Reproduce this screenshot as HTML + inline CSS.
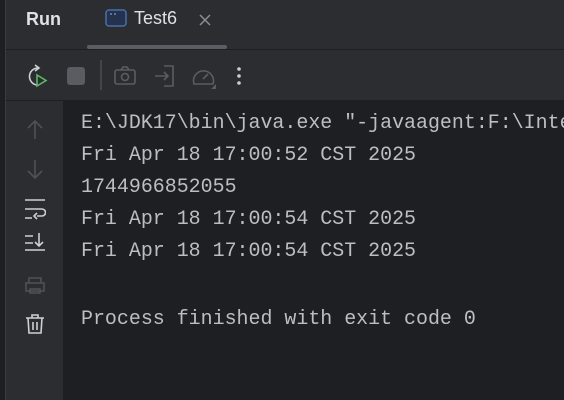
<!DOCTYPE html>
<html><head><style>
*{margin:0;padding:0;box-sizing:border-box}
body{width:564px;height:400px;background:#2b2d30;position:relative;overflow:hidden;font-family:"Liberation Sans",sans-serif}
.ab{position:absolute}
.line{position:absolute;left:81px;font-family:"Liberation Mono",monospace;font-size:19.95px;color:#bcbec4;white-space:pre}
</style></head><body>
<div class="ab" style="left:0;top:0;width:5px;height:400px;background:#1e1f22"></div>
<div class="ab" style="left:5px;top:0;width:1px;height:400px;background:#393b40"></div>
<div class="ab" style="left:26px;top:9px;font-weight:bold;font-size:18px;color:#dfe1e5">Run</div>
<svg class="ab" style="left:105px;top:9px" width="22" height="20"><rect x="1" y="1" width="20" height="16" rx="3" fill="#25324d" stroke="#4a6ea9" stroke-width="1.5"/><path d="M5 5h2M9 5h2" stroke="#7a9ad0" stroke-width="1.2"/></svg>
<div class="ab" style="left:134px;top:8px;font-size:18px;color:#dfe1e5">Test6</div>
<svg class="ab" style="left:198px;top:13px" width="14" height="14"><path d="M2 2l10 10M12 2L2 12" stroke="#8c8f96" stroke-width="1.5"/></svg>
<div class="ab" style="left:87px;top:45px;width:140px;height:4px;border-radius:2px;background:#5a5d63"></div>
<div class="ab" style="left:6px;top:49px;width:558px;height:1px;background:#1e1f22"></div>
<svg class="ab" style="left:24px;top:64px" width="26" height="26"><path d="M14 4a8 8 0 1 0 0 17" fill="none" stroke="#ced0d6" stroke-width="1.6"/><path d="M11 1l4 3-4 3" fill="none" stroke="#ced0d6" stroke-width="1.6"/><path d="M13 11v11l9-5.5z" fill="none" stroke="#5fb865" stroke-width="1.6"/></svg>
<div class="ab" style="left:67px;top:67px;width:18px;height:18px;border-radius:3px;background:#5a5c61"></div>
<div class="ab" style="left:100px;top:60px;width:2px;height:30px;background:#43454a"></div>
<svg class="ab" style="left:113px;top:64px" width="26" height="24"><rect x="2" y="6" width="20" height="14" rx="2" fill="none" stroke="#5a5d63" stroke-width="1.6"/><circle cx="12" cy="13" r="3.5" fill="none" stroke="#5a5d63" stroke-width="1.6"/><path d="M8 6l2-3h4l2 3" fill="none" stroke="#5a5d63" stroke-width="1.6"/></svg>
<svg class="ab" style="left:153px;top:64px" width="24" height="24"><path d="M11 2h9v20h-9" fill="none" stroke="#5a5d63" stroke-width="1.6"/><path d="M2 12h13M11 8l4 4-4 4" fill="none" stroke="#5a5d63" stroke-width="1.6"/></svg>
<svg class="ab" style="left:191px;top:64px" width="26" height="26"><path d="M3 20a10 10 0 1 1 19 0z" fill="none" stroke="#5a5d63" stroke-width="1.6"/><path d="M12 15l5-5" stroke="#5a5d63" stroke-width="1.6"/><path d="M25 20v5h-5z" fill="#5a5d63"/></svg>
<svg class="ab" style="left:236px;top:66px" width="6" height="20"><circle cx="3" cy="3" r="1.8" fill="#ced0d6"/><circle cx="3" cy="10" r="1.8" fill="#ced0d6"/><circle cx="3" cy="17" r="1.8" fill="#ced0d6"/></svg>
<div class="ab" style="left:6px;top:100px;width:558px;height:1px;background:#1e1f22"></div>
<div class="ab" style="left:63px;top:101px;width:501px;height:299px;background:#1e1f22"></div>
<svg class="ab" style="left:24px;top:118px" width="22" height="230" fill="none" stroke-width="1.6">
<path d="M11 3v18M4 10l7-7 7 7" stroke="#4e5157"/>
<path d="M11 42v18M4 53l7 7 7-7" stroke="#4e5157"/>
<path d="M1 82h20M1 91h10M1 100h7M13 98h5a3 3 0 0 0 0-7h-8M13 95l-3 3 3 3" stroke="#ced0d6"/>
<path d="M1 118h8M1 125h8M1 132h20M15 115v13M11 124l4 4 4-4" stroke="#ced0d6"/>
<path d="M5 165v-5h12v5M2 165h18v8H2zM6 171h10v4H6z" stroke="#4e5157"/>
<path d="M2 200h18M8 200v-3h6v3M4 200l1 15h12l1-15M9 204v8M13 204v8" stroke="#ced0d6"/>
</svg>
<div class="line" style="top:111px">E:\JDK17\bin\java.exe "-javaagent:F:\Inte</div>
<div class="line" style="top:143px">Fri Apr 18 17:00:52 CST 2025</div>
<div class="line" style="top:175px">1744966852055</div>
<div class="line" style="top:207px">Fri Apr 18 17:00:54 CST 2025</div>
<div class="line" style="top:239px">Fri Apr 18 17:00:54 CST 2025</div>
<div class="line" style="top:307px">Process finished with exit code 0</div>
</body></html>
